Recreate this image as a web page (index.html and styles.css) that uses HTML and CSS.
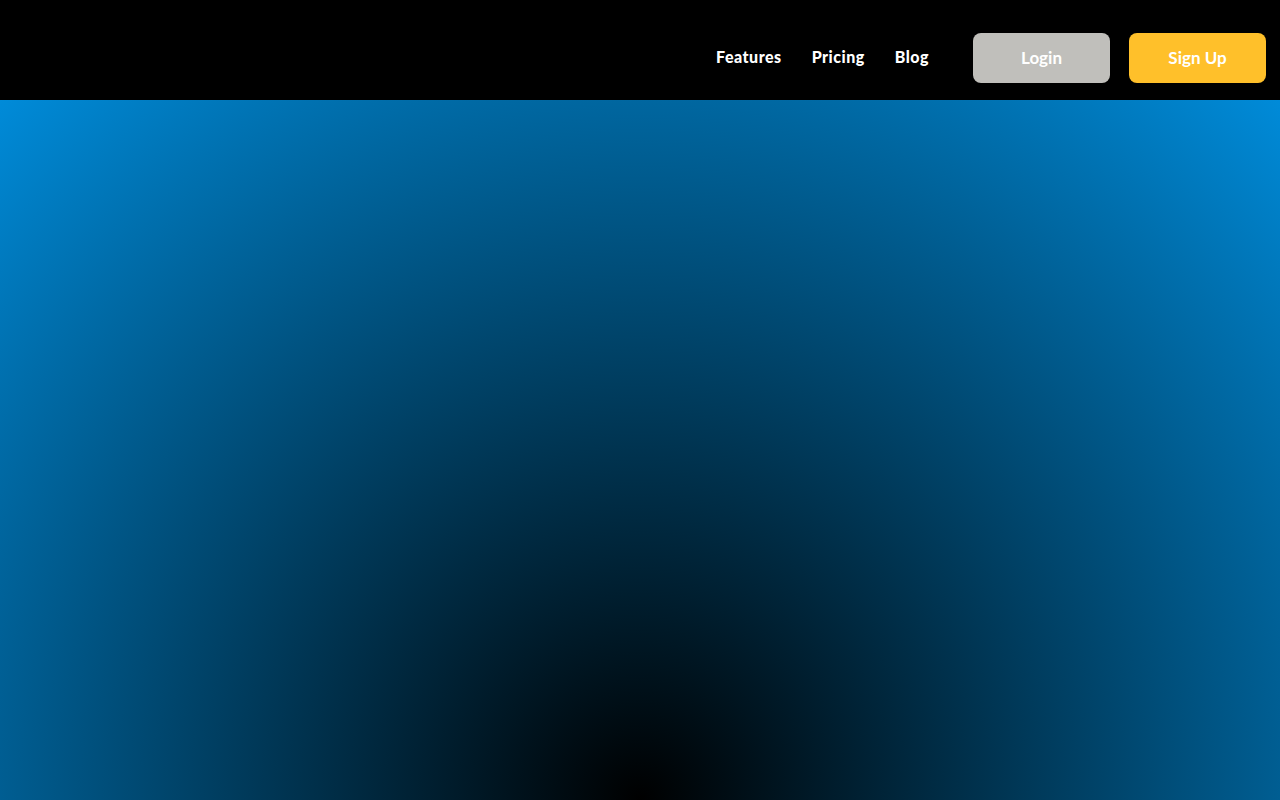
FILE: index.html
```html
<!DOCTYPE html>
<html lang="en">
<head>
    <meta charset="UTF-8">
    <meta name="viewport" content="width=device-width, initial-scale=1.0">
    <title>Landing</title>
    <link rel="stylesheet" href="styles.css">
</head>
<body>
    <header class="header">
        <nav class="nav">
            <a href="#" class="nav-link">Features</a>
            <a href="#" class="nav-link">Pricing</a>
            <a href="#" class="nav-link">Blog</a>
        </nav>
        <div class="auth">
            <button class="btn btn-login">Login</button>
            <button class="btn btn-signup">Sign Up</button>
        </div>
    </header>

    <main class="hero"></main>
</body>
</html>
```

FILE: styles.css
```css
html, body {
    height: 100%;
}

body {
    margin: 0;
    padding: 0;
    min-height: 100vh;
    display: flex;
    flex-direction: column;
    background: radial-gradient(circle farthest-corner at 50% 100%, #000000 0%, #0096ea 100%);
    font-family: Lato, "Open Sans", Arial, sans-serif;
}

.header {
    height: 100px;
    flex-shrink: 0;
    background: #000;
    display: flex;
    align-items: center;
    justify-content: flex-end;
    padding: 0 14px 0 0;
    box-sizing: border-box;
}

.nav {
    display: flex;
    align-items: center;
    gap: 30px;
    margin-right: 44px;
    padding-top: 12px;
}

.nav-link {
    color: #fff;
    text-decoration: none;
    font-size: 16px;
    font-weight: 900;
    letter-spacing: 0.5px;
}

.auth {
    display: flex;
    gap: 19px;
    padding-top: 16px;
}

.btn {
    width: 137px;
    height: 50px;
    padding: 0 0 2px;
    border: none;
    border-radius: 8px;
    color: #fff;
    font-family: Lato, "Open Sans", Arial, sans-serif;
    font-size: 17px;
    font-weight: bold;
    cursor: pointer;
}

.btn-login {
    background: #c0bfbb;
}

.btn-signup {
    background: #ffc02a;
}

.hero {
    flex: 1;
}
```
